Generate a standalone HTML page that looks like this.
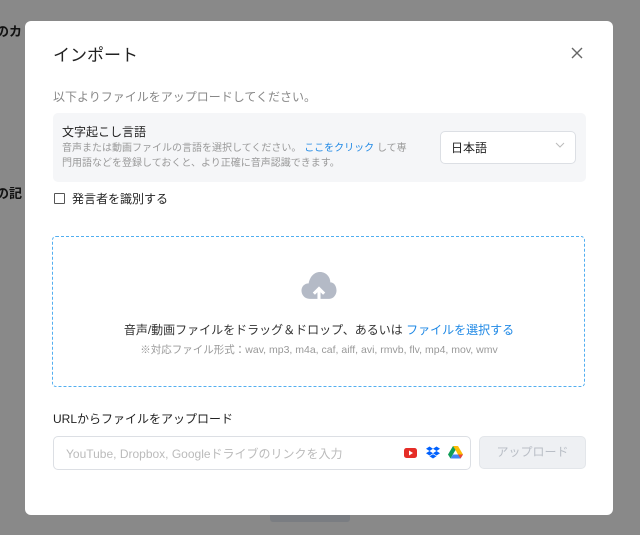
<!DOCTYPE html>
<html><head><meta charset="utf-8"><style>
body{margin:0;width:640px;height:535px;background:#898989;position:relative;overflow:hidden;font-family:"Liberation Sans","Noto Sans CJK JP",sans-serif;}
.a{position:absolute;white-space:nowrap}
.m{position:absolute;left:25px;top:21px;width:588px;height:494px;background:#fff;border-radius:6px}
</style></head><body>
<div class="a" style="left:-4px;top:21px;font-size:13px;font-weight:bold;color:#111">のカ</div>
<div class="a" style="left:-4px;top:183px;font-size:13px;font-weight:bold;color:#111">の記</div>
<div class="a" style="left:270px;top:512px;width:80px;height:10px;background:#7a7d82;border-radius:3px"></div>
<div class="m">
<div class="a" style="left:28px;top:20px;font-size:17px;color:#222">インポート</div>
<svg class="a" style="left:546px;top:26px" width="12" height="12"><path d="M1 1L11 11M11 1L1 11" stroke="#666" stroke-width="1.4"/></svg>
<div class="a" style="left:28px;top:67px;font-size:12px;color:#888">以下よりファイルをアップロードしてください。</div>
<div class="a" style="left:28px;top:92px;width:533px;height:69px;background:#f5f6f8;border-radius:5px"></div>
<div class="a" style="left:37px;top:102px;font-size:12px;color:#222">文字起こし言語</div>
<div class="a" style="left:37px;top:120px;font-size:10px;color:#999;line-height:15px">音声または動画ファイルの言語を選択してください。 <span style="color:#1e88e5">ここをクリック</span> して専<br>門用語などを登録しておくと、より正確に音声認識できます。</div>
<div class="a" style="left:415px;top:110px;width:134px;height:31px;background:#fff;border:1px solid #dcdfe4;border-radius:5px"></div>
<div class="a" style="left:426px;top:118px;font-size:12px;color:#222">日本語</div>
<svg class="a" style="left:530px;top:121px" width="10" height="7"><path d="M1 1L5 5L9 1" stroke="#bbb" fill="none"/></svg>
<div class="a" style="left:29px;top:172px;width:9px;height:9px;border:1px solid #555;border-radius:1px"></div>
<div class="a" style="left:47px;top:169px;font-size:12px;color:#222">発言者を識別する</div>
<div class="a" style="left:27px;top:215px;width:531px;height:149px;border:1px dashed #52aef0;border-radius:4px"></div>
<svg class="a" style="left:275px;top:249px" width="38" height="34" viewBox="0 0 36 33"><path d="M9 28C4 28 1 24 1 20C1 16 4 13 8 13C9 7 13 2 19 2C25 2 29 7 29 12C33 12 35 16 35 20C35 24 32 28 28 28Z" fill="#b4bac6"/><path d="M18 32V19M13 23L18 18L23 23" stroke="#fff" stroke-width="3" fill="none"/></svg>
<div class="a" style="left:0;width:588px;text-align:center;top:300px;font-size:12px;color:#333">音声/動画ファイルをドラッグ＆ドロップ、あるいは <span style="color:#1e88e5">ファイルを選択する</span></div>
<div class="a" style="left:0;width:588px;text-align:center;top:321px;font-size:10.5px;color:#999">※対応ファイル形式：wav, mp3, m4a, caf, aiff, avi, rmvb, flv, mp4, mov, wmv</div>
<div class="a" style="left:28px;top:389px;font-size:12px;color:#222">URLからファイルをアップロード</div>
<div class="a" style="left:28px;top:415px;width:416px;height:32px;border:1px solid #dcdfe4;border-radius:5px"></div>
<div class="a" style="left:41px;top:424px;font-size:12px;color:#bbb">YouTube, Dropbox, Googleドライブのリンクを入力</div>
<svg class="a" style="left:379px;top:426px" width="14" height="12"><rect x="0" y="1" width="13" height="10" rx="2.5" fill="#e52d27"/><path d="M5 3.5L9 6L5 8.5Z" fill="#fff"/></svg>
<svg class="a" style="left:401px;top:425px" width="14" height="13" viewBox="0 0 14 13"><path d="M3.5 0.5L7 2.7L3.5 5L0 2.7ZM10.5 0.5L14 2.7L10.5 5L7 2.7ZM3.5 5L7 7.3L3.5 9.5L0 7.3ZM10.5 5L14 7.3L10.5 9.5L7 7.3ZM3.5 10.3L7 8.2L10.5 10.3L7 12.5Z" fill="#0061fe"/></svg>
<svg class="a" style="left:423px;top:424px" width="15" height="14" viewBox="0 0 15 14"><path d="M5 1H10L7.5 5.5Z" fill="#ffba00"/><path d="M5 1L0 9.5L2.5 13.5L7.5 5Z" fill="#0f9d58"/><path d="M10 1L15 9.5H10L7.5 5Z" fill="#fbbc04"/><path d="M2.5 13.5H12.5L15 9.5H5Z" fill="#4285f4"/><path d="M15 9.5L12.5 13.5L10 9.5Z" fill="#ea4335"/></svg>
<div class="a" style="left:454px;top:415px;width:107px;height:33px;background:#eef0f3;border:1px solid #e3e6ea;border-radius:5px;box-sizing:border-box;text-align:center;line-height:31px;font-size:12px;color:#b9bec6">アップロード</div>
</div>
</body></html>
